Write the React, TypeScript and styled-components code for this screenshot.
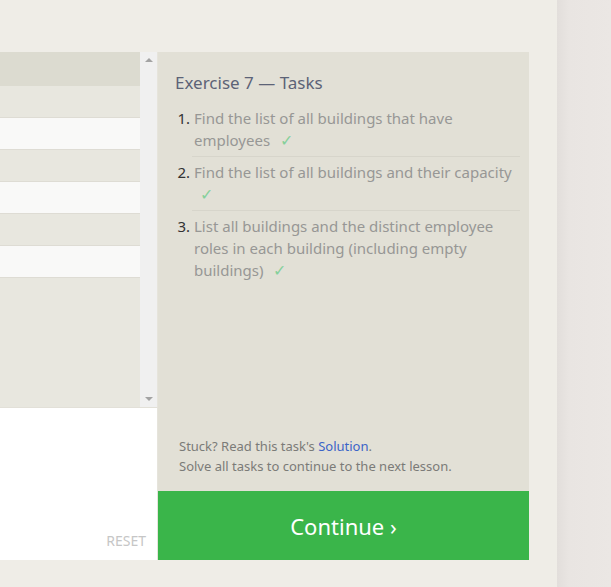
import React from "react";
import styled, { createGlobalStyle } from "styled-components";

const Global = createGlobalStyle`
  html, body { margin: 0; padding: 0; }
  body {
    background: #efede7;
    font-family: "Noto Sans", "Open Sans", sans-serif;
    width: 611px;
    height: 587px;
    overflow: hidden;
  }
`;

const Page = styled.div`
  display: flex;
  width: 611px;
  height: 587px;
`;

const Main = styled.div`
  width: 557px;
  padding-top: 52px;
  box-sizing: border-box;
`;

const Strip = styled.div`
  flex: 1;
  background: linear-gradient(to right, #e2dedb 0px, #e9e5e2 12px, #ebe7e4 100%);
`;

const Row = styled.div`
  display: flex;
  width: 529px;
`;

const LeftCol = styled.div`
  width: 158px;
  display: flex;
  flex-direction: column;
`;

const TableArea = styled.div`
  display: flex;
  height: 355px;
  border-right: 1px solid #e6e4dc;
`;

const Table = styled.div`
  flex: 1;
  display: flex;
  flex-direction: column;
  background: #e8e7df;
`;

const HeaderRow = styled.div`
  height: 34px;
  background: #dcdbd0;
`;

const DataRow = styled.div<{ $light?: boolean }>`
  height: 31px;
  border-bottom: 1px solid #dedcd4;
  background: ${(p) => (p.$light ? "#f9f9f8" : "#e8e7df")};
`;

const Scrollbar = styled.div`
  width: 17px;
  background: #f0f0f0;
  display: flex;
  flex-direction: column;
  justify-content: space-between;
  align-items: center;
  padding: 6px 0 6px;
  box-sizing: border-box;
`;

const Arrow = styled.div<{ $down?: boolean }>`
  width: 0;
  height: 0;
  border-left: 4px solid transparent;
  border-right: 4px solid transparent;
  ${(p) =>
    p.$down
      ? "border-top: 4px solid #a3a3a3;"
      : "border-bottom: 4px solid #a3a3a3;"}
`;

const Editor = styled.div`
  height: 153px;
  background: #ffffff;
  border-top: 1px solid #e2e0d8;
  border-right: 1px solid #e6e4dc;
  display: flex;
  align-items: flex-end;
  justify-content: flex-end;
  padding: 0 11px 10px 0;
  box-sizing: border-box;
`;

const Reset = styled.span`
  font-size: 14px;
  color: #c6c6c6;
`;

const RightCol = styled.div`
  width: 371px;
  display: flex;
  flex-direction: column;
`;

const Tasks = styled.div`
  height: 439px;
  background: #e2e0d6;
  padding: 20px 9px 0 17px;
  box-sizing: border-box;
  display: flex;
  flex-direction: column;
`;

const Title = styled.div`
  font-size: 17px;
  color: #5c6377;
  line-height: 22px;
  margin-bottom: 13px;
`;

const List = styled.ol`
  margin: 0;
  padding: 0;
  list-style: none;
  flex: 1;
`;

const Item = styled.li<{ $last?: boolean }>`
  display: flex;
  font-size: 15px;
  line-height: 22px;
  color: #979795;
  padding-bottom: ${(p) => (p.$last ? 0 : 6)}px;
  margin-bottom: ${(p) => (p.$last ? 0 : 4)}px;
  position: relative;
  &::after {
    content: "";
    display: ${(p) => (p.$last ? "none" : "block")};
    position: absolute;
    left: 17px;
    right: 0;
    bottom: 0;
    height: 1px;
    background: #d7d5cb;
  }
`;

const Num = styled.span`
  width: 19px;
  flex: none;
  color: #333;
  text-align: right;
  padding-right: 4px;
  box-sizing: border-box;
`;

const Text = styled.span`
  flex: 1;
`;

const Check = styled.span`
  color: #86d09b;
  font-size: 16px;
  line-height: 1;
  padding-left: 6px;
`;

const Footer = styled.div`
  font-size: 13px;
  line-height: 20px;
  color: #7b7b78;
  padding: 0 0 15px 4px;
`;

const Link = styled.span`
  color: #3b64c8;
`;

const Continue = styled.div`
  height: 69px;
  background: #3ab54a;
  color: #ffffff;
  font-size: 22px;
  display: flex;
  align-items: center;
  justify-content: center;
`;

export default function App() {
  return (
    <>
      <Global />
      <Page>
        <Main>
          <Row>
            <LeftCol>
              <TableArea>
                <Table>
                  <HeaderRow />
                  <DataRow />
                  <DataRow $light />
                  <DataRow />
                  <DataRow $light />
                  <DataRow />
                  <DataRow $light />
                </Table>
                <Scrollbar>
                  <Arrow />
                  <Arrow $down />
                </Scrollbar>
              </TableArea>
              <Editor>
                <Reset>RESET</Reset>
              </Editor>
            </LeftCol>
            <RightCol>
              <Tasks>
                <Title>Exercise 7 — Tasks</Title>
                <List>
                  <Item>
                    <Num>1.</Num>
                    <Text>
                      Find the list of all buildings that have employees{" "}
                      <Check>✓</Check>
                    </Text>
                  </Item>
                  <Item>
                    <Num>2.</Num>
                    <Text>
                      Find the list of all buildings and their capacity{" "}
                      <Check>✓</Check>
                    </Text>
                  </Item>
                  <Item $last>
                    <Num>3.</Num>
                    <Text>
                      List all buildings and the distinct employee roles in each
                      building (including empty buildings){" "}
                      <Check>✓</Check>
                    </Text>
                  </Item>
                </List>
                <Footer>
                  Stuck? Read this task's <Link>Solution</Link>.
                  <br />
                  Solve all tasks to continue to the next lesson.
                </Footer>
              </Tasks>
              <Continue>Continue ›</Continue>
            </RightCol>
          </Row>
        </Main>
        <Strip />
      </Page>
    </>
  );
}
